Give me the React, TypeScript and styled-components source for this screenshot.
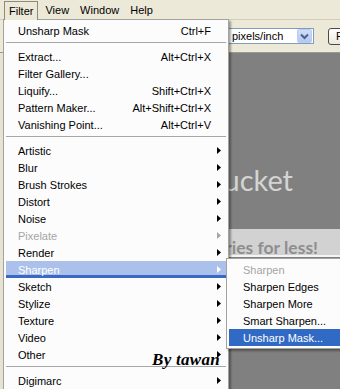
import React from "react";
import styled, { createGlobalStyle } from "styled-components";

const Global = createGlobalStyle`
  html, body { margin: 0; padding: 0; background: #808080; }
  body { font-family: "Liberation Sans", Arial, sans-serif; font-size: 11px; color: #000; }
  * { box-sizing: border-box; }
`;

const Page = styled.div`
  position: relative;
  width: 340px;
  height: 389px;
  overflow: hidden;
  display: flex;
  flex-direction: column;
  background: #808080;
`;

const MenuBar = styled.div`
  flex: none;
  height: 20px;
  display: flex;
  align-items: stretch;
  gap: 3px;
  padding: 1px 0 0 4px;
  background: #ece9d8;
  border-bottom: 1px solid #d3cebb;
`;

const BarItem = styled.div<{ $open?: boolean }>`
  display: flex;
  align-items: center;
  padding: 0 ${(p) => (p.$open ? 4 : 3)}px 1px;
  border: 1px solid ${(p) => (p.$open ? "#8d8a80" : "transparent")};
  border-bottom: none;
  background: #ece9d8;
  position: relative;
  z-index: ${(p) => (p.$open ? 4 : 0)};
  height: ${(p) => (p.$open ? "19px" : "auto")};
`;

const Toolbar = styled.div`
  flex: none;
  height: 33px;
  display: flex;
  align-items: center;
  gap: 14px;
  padding-left: 228px;
  background: #ece9d8;
  border-bottom: 1px solid #9c9a90;
  overflow: hidden;
`;

const Combo = styled.div`
  flex: 0 0 86px;
  width: 86px;
  height: 16px;
  display: flex;
  align-items: center;
  justify-content: space-between;
  padding: 0 1px 0 3px;
  background: #fff;
  border: 1px solid #7f9db9;
`;

const ComboButton = styled.div`
  flex: none;
  width: 15px;
  height: 14px;
  display: flex;
  align-items: center;
  justify-content: center;
  background: linear-gradient(#d0dcfa, #b4c8f5);
  border: 1px solid #b9ccf4;
  border-radius: 2px;
`;

const PushButton = styled.div`
  flex: none;
  height: 17px;
  display: flex;
  align-items: center;
  padding: 0 8px 0 7px;
  border: 1px solid #4a4a4a;
  border-radius: 3px;
  background: linear-gradient(#ffffff, #ece9e0);
  white-space: nowrap;
`;

const Body = styled.div`
  flex: 1;
  display: flex;
  flex-direction: column;
  background: #808080;
  border-left: 3px solid #e6e3d4;
`;

const LogoArea = styled.div`
  flex: none;
  height: 176px;
  display: flex;
  justify-content: flex-end;
  padding: 112px 47px 0 0;
  font-family: Lato, "Open Sans", sans-serif;
  font-size: 29px;
  line-height: 30px;
  color: #d4d4d4;
  white-space: nowrap;
`;

const Band = styled.div`
  flex: none;
  height: 28px;
  display: flex;
  justify-content: flex-end;
  align-items: flex-end;
  padding: 0 22px 1px 0;
  background: #d2d2d2;
  border-bottom: 2px solid #f4f4f4;
  font-family: Lato, "Open Sans", sans-serif;
  font-weight: 700;
  font-size: 17.5px;
  line-height: 12px;
  color: #8e8e8e;
  white-space: nowrap;
`;

const Menu = styled.div<{ $left: number; $top: number; $width: number; $z: number }>`
  position: absolute;
  left: ${(p) => p.$left}px;
  top: ${(p) => p.$top}px;
  width: ${(p) => p.$width}px;
  z-index: ${(p) => p.$z};
  padding: 2px;
  background: #fcfcfc;
  border: 1px solid #a3a29b;
  box-shadow: 2px 2px 2px rgba(0, 0, 0, 0.35);
`;

type RowState = "normal" | "hover" | "disabled" | "active";

const Row = styled.div<{ $state: RowState; $pad: number }>`
  display: grid;
  grid-template-columns: 1fr auto 15px;
  align-items: center;
  height: 17px;
  padding-left: ${(p) => p.$pad}px;
  white-space: nowrap;
  color: ${(p) =>
    p.$state === "disabled" ? "#a5a5a5" : p.$state === "normal" ? "#000" : "#fff"};
  background: ${(p) =>
    p.$state === "hover" ? "#abc1eb" : p.$state === "active" ? "#316ac5" : "transparent"};
  box-shadow: ${(p) => (p.$state === "hover" ? "inset 0 -3px 0 #3a69c4" : "none")};
`;

const Shortcut = styled.span`
  text-align: right;
`;

const Arrow = styled.svg`
  justify-self: start;
  margin-left: 6px;
  display: block;
`;

const Separator = styled.div`
  height: 1px;
  margin: 3px 0 5px;
  background: #a6a6a6;
`;

const Signature = styled.div`
  position: absolute;
  left: 152px;
  top: 350px;
  z-index: 5;
  font-family: "Liberation Serif", "DejaVu Serif", serif;
  font-weight: bold;
  font-style: italic;
  font-size: 17px;
  letter-spacing: 0.3px;
  color: #000;
`;

type Item =
  | { sep: true }
  | { label: string; shortcut?: string; sub?: boolean; state?: RowState; sep?: false };

const filterItems: Item[] = [
  { label: "Unsharp Mask", shortcut: "Ctrl+F" },
  { sep: true },
  { label: "Extract...", shortcut: "Alt+Ctrl+X" },
  { label: "Filter Gallery..." },
  { label: "Liquify...", shortcut: "Shift+Ctrl+X" },
  { label: "Pattern Maker...", shortcut: "Alt+Shift+Ctrl+X" },
  { label: "Vanishing Point...", shortcut: "Alt+Ctrl+V" },
  { sep: true },
  { label: "Artistic", sub: true },
  { label: "Blur", sub: true },
  { label: "Brush Strokes", sub: true },
  { label: "Distort", sub: true },
  { label: "Noise", sub: true },
  { label: "Pixelate", sub: true, state: "disabled" },
  { label: "Render", sub: true },
  { label: "Sharpen", sub: true, state: "hover" },
  { label: "Sketch", sub: true },
  { label: "Stylize", sub: true },
  { label: "Texture", sub: true },
  { label: "Video", sub: true },
  { label: "Other", sub: true },
  { sep: true },
  { label: "Digimarc", sub: true },
];

const sharpenItems: Item[] = [
  { label: "Sharpen", state: "disabled" },
  { label: "Sharpen Edges" },
  { label: "Sharpen More" },
  { label: "Smart Sharpen..." },
  { label: "Unsharp Mask...", state: "active" },
];

function MenuList({ items, pad }: { items: Item[]; pad: number }) {
  return (
    <>
      {items.map((it, i) =>
        it.sep ? (
          <Separator key={i} />
        ) : (
          <Row key={i} $state={it.state ?? "normal"} $pad={pad}>
            <span>{it.label}</span>
            <Shortcut>{it.shortcut ?? ""}</Shortcut>
            {it.sub ? (
              <Arrow width="4" height="7" viewBox="0 0 4 7">
                <path d="M0 0 L4 3.5 L0 7 Z" fill="currentColor" />
              </Arrow>
            ) : (
              <span />
            )}
          </Row>
        )
      )}
    </>
  );
}

export default function App() {
  return (
    <Page>
      <Global />
      <MenuBar>
        <BarItem $open>Filter</BarItem>
        <BarItem>View</BarItem>
        <BarItem>Window</BarItem>
        <BarItem>Help</BarItem>
      </MenuBar>
      <Toolbar>
        <Combo>
          <span>pixels/inch</span>
          <ComboButton>
            <svg width="9" height="7" viewBox="0 0 9 7">
              <path d="M1 1.5 L4.5 5 L8 1.5" stroke="#4d6185" strokeWidth="2" fill="none" />
            </svg>
          </ComboButton>
        </Combo>
        <PushButton>Front Image</PushButton>
      </Toolbar>
      <Body>
        <LogoArea>photobucket</LogoArea>
        <Band>Protect more of your memories for less!</Band>
      </Body>
      <Menu $left={3} $top={19} $width={226} $z={2}>
        <MenuList items={filterItems} pad={12} />
      </Menu>
      <Menu $left={226} $top={258} $width={130} $z={3}>
        <MenuList items={sharpenItems} pad={14} />
      </Menu>
      <Signature>By tawan</Signature>
    </Page>
  );
}
